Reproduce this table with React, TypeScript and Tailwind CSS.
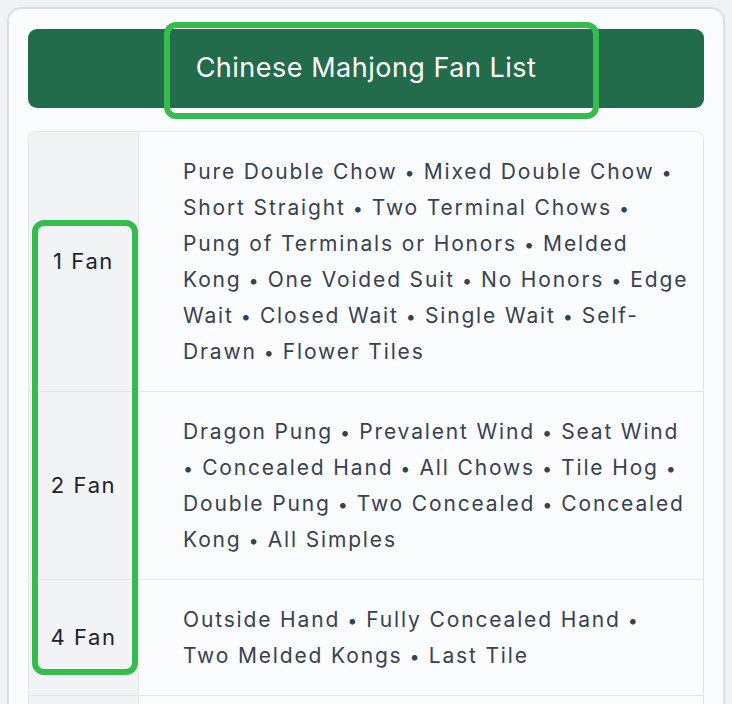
const rows = [
  {
    fan: '1 Fan',
    lines: [
      'Pure Double Chow • Mixed Double Chow •',
      'Short Straight • Two Terminal Chows •',
      'Pung of Terminals or Honors • Melded',
      'Kong • One Voided Suit • No Honors • Edge',
      'Wait • Closed Wait • Single Wait • Self-',
      'Drawn • Flower Tiles',
    ],
  },
  {
    fan: '2 Fan',
    lines: [
      'Dragon Pung • Prevalent Wind • Seat Wind',
      '• Concealed Hand • All Chows • Tile Hog •',
      'Double Pung • Two Concealed • Concealed',
      'Kong • All Simples',
    ],
  },
  {
    fan: '4 Fan',
    lines: ['Outside Hand • Fully Concealed Hand •', 'Two Melded Kongs • Last Tile'],
  },
  {
    fan: '6 Fan',
    lines: ['All Pungs • Half Flush • Mixed Shifted Chows •', 'All Types • Melded Hand'],
  },
]

// renders one wrapped line, with the small bullet separators
function Line({ text }: { text: string }) {
  const parts = text.split('•')
  return (
    <div className="whitespace-nowrap">
      {parts.map((p, i) => (
        <span key={i}>
          {p.trim()}
          {i < parts.length - 1 && (
            <span
              className={`text-[18px] leading-none tracking-normal ${i === 0 && p.trim() === '' ? 'mr-[9px]' : 'mr-[9px] ml-[7px]'}`}
            >
              •
            </span>
          )}
        </span>
      ))}
    </div>
  )
}

export default function App() {
  return (
    <div
      className="relative h-[704px] overflow-hidden bg-[#f1f2f5] pl-[7px] pt-[7px]"
      style={{ fontFamily: 'Inter, "Noto Sans", sans-serif' }}
    >
      <div className="w-[718px] rounded-[14px] border-2 border-[#dcdee3] bg-[#fbfcfd] px-[19px] pt-[20px]">
        <header className="flex h-[79px] items-center justify-center rounded-[9px] bg-[#226c4b] text-[27px] tracking-[0.5px] text-white">
          Chinese Mahjong Fan List
        </header>

        <div className="mt-[23px] overflow-hidden rounded-t-lg border border-[#e3e5e8]">
          {rows.map((r, i) => (
            <div key={r.fan} className={`flex ${i > 0 ? 'border-t border-[#e3e5e8]' : ''}`}>
              <div className="flex w-[110px] shrink-0 items-center justify-center border-r border-[#e3e5e8] bg-[#f2f3f5] text-[22px] tracking-[1.6px] text-[#1a2230]">
                {r.fan}
              </div>
              <div className="flex-1 py-[21.5px] pl-[44px] pr-[16px] text-[21px] leading-[36px] tracking-[1.85px] text-[#374151]">
                {r.lines.map((l) => (
                  <Line key={l} text={l} />
                ))}
              </div>
            </div>
          ))}
        </div>
      </div>

      {/* highlight boxes */}
      <div className="absolute left-[164px] top-[22px] h-[97px] w-[435px] rounded-[12px] border-[6px] border-[#35bc4f]" />
      <div className="absolute left-[32px] top-[220px] h-[455px] w-[106px] rounded-[12px] border-[6px] border-[#35bc4f]" />
    </div>
  )
}
